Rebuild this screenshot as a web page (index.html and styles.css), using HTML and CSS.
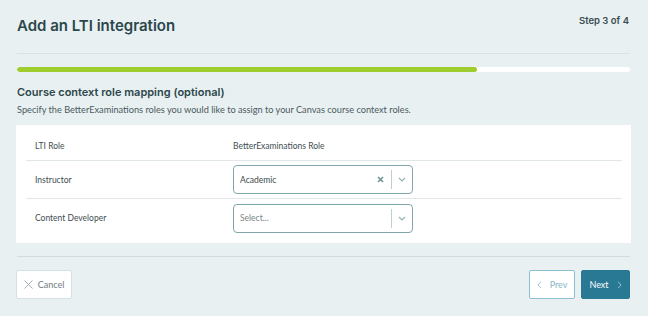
FILE: index.html
```html
<!DOCTYPE html>
<html>
<head>
<meta charset="utf-8">
<link rel="stylesheet" href="styles.css">
</head>
<body>
<div class="page">
  <header class="top">
    <h1 class="title">Add an LTI integration</h1>
    <div class="step">Step 3 of 4</div>
  </header>
  <div class="progress"><div class="progress-fill" style="width:75%"></div></div>
  <h2 class="section-title">Course context role mapping (optional)</h2>
  <p class="desc">Specify the BetterExaminations roles you would like to assign to your Canvas course context roles.</p>
  <div class="card">
    <div class="row head">
      <div class="cell">LTI Role</div>
      <div class="cell">BetterExaminations Role</div>
    </div>
    <div class="row">
      <div class="cell">Instructor</div>
      <div class="cell">
        <div class="select">
          <span class="value">Academic</span>
          <span class="clear"><svg width="7" height="7" viewBox="0 0 7 7"><path d="M1 1L6 6M6 1L1 6" stroke="#6f9296" stroke-width="1.6"/></svg></span>
          <span class="sep"></span>
          <span class="chev"><svg width="8" height="5" viewBox="0 0 8 5"><path d="M1 1L4 4L7 1" fill="none" stroke="#8fb1b5" stroke-width="1.1"/></svg></span>
        </div>
      </div>
    </div>
    <div class="row last">
      <div class="cell">Content Developer</div>
      <div class="cell">
        <div class="select">
          <span class="value placeholder">Select...</span>
          <span class="sep"></span>
          <span class="chev"><svg width="8" height="5" viewBox="0 0 8 5"><path d="M1 1L4 4L7 1" fill="none" stroke="#8fb1b5" stroke-width="1.1"/></svg></span>
        </div>
      </div>
    </div>
  </div>
  <footer class="footer">
    <button class="btn cancel"><svg class="ico" width="9" height="9" viewBox="0 0 9 9"><path d="M0.5 0.5L8.5 8.5M8.5 0.5L0.5 8.5" stroke="#a3aeb1" stroke-width="1"/></svg><span>Cancel</span></button>
    <div class="nav">
      <button class="btn prev"><svg class="ico" width="5" height="8" viewBox="0 0 5 8"><path d="M4 0.8L1 4L4 7.2" fill="none" stroke="#9cc6d4" stroke-width="1"/></svg><span>Prev</span></button>
      <button class="btn next"><span>Next</span><svg class="ico" width="5" height="8" viewBox="0 0 5 8"><path d="M1 0.8L4 4L1 7.2" fill="none" stroke="#8fc0d0" stroke-width="1"/></svg></button>
    </div>
  </footer>
</div>
</body>
</html>
```
FILE: styles.css
```css
* { box-sizing: border-box; }
html, body { margin: 0; padding: 0; }
body {
  background: #e8f0f2;
  font-family: Lato, "Liberation Sans", sans-serif;
  color: #3d4f53;
  width: 648px;
  height: 316px;
  overflow: hidden;
}
.page { padding: 0 18px 0 17px; }
.top {
  display: flex;
  justify-content: space-between;
  align-items: flex-start;
  height: 54px;
  border-bottom: 1px solid #d9e3e6;
}
.title {
  margin: 17px 0 0;
  font-family: Inter, "Open Sans", sans-serif;
  font-weight: 600;
  font-size: 15px;
  line-height: 18px;
  color: #2c474b;
}
.step {
  margin-top: 15px;
  font-family: Inter, "Open Sans", sans-serif;
  font-weight: 600;
  font-size: 9.5px;
  line-height: 11px;
  color: #3a4c50;
  margin-right: 1px;
}
.progress {
  margin-top: 13px;
  height: 5px;
  background: #fff;
  border-radius: 3px;
  overflow: hidden;
}
.progress-fill { height: 100%; background: #9fcc2e; border-radius: 3px; }
.section-title {
  margin: 14px 0 0;
  font-family: Inter, "Open Sans", sans-serif;
  font-weight: 600;
  font-size: 11px;
  line-height: 13px;
  color: #2c474b;
}
.desc {
  margin: 5px 0 0;
  font-size: 9.2px;
  line-height: 12px;
  color: #4b5a5e;
}
.card {
  margin: 9px -1px 0 -1px;
  background: #fff;
  padding: 7px 9px 6px 10px;
}
.row {
  display: grid;
  grid-template-columns: 198px 1fr;
  align-items: center;
  height: 38px;
  border-bottom: 1px solid #e1e6e7;
  font-size: 8.5px;
  color: #414e51;
}
.row.head { height: 29px; }
.row.last { border-bottom: none; height: 38px; }
.cell { padding: 0 9px; }
.select {
  width: 180px;
  height: 29px;
  border: 1px solid #7fa6aa;
  border-radius: 4px;
  display: flex;
  align-items: center;
  padding-left: 6px;
}
.value { flex: 1; font-size: 8.5px; color: #3d4a4d; }
.placeholder { color: #7a8588; }
.clear { display: flex; align-items: center; padding: 0 7px 0 6px; }
.sep { width: 1px; height: 19px; background: #bcd0d2; }
.chev { display: flex; align-items: center; justify-content: center; width: 20px; }
.footer {
  margin-top: 13px;
  border-top: 1px solid #d2dcdf;
  padding-top: 13px;
  display: flex;
  justify-content: space-between;
}
.btn {
  height: 29px;
  border-radius: 2px;
  font-family: Lato, "Liberation Sans", sans-serif;
  font-size: 9px;
  display: flex;
  align-items: center;
  justify-content: center;
  gap: 5px;
  padding: 0;
  cursor: pointer;
}
.ico { flex-shrink: 0; display: block; }
.cancel { margin-left: -1px; background: #fff; border: 1px solid #d6e1e5; color: #6f7d81; width: 56px; }
.nav { display: flex; gap: 6px; }
.prev { background: #fff; border: 1px solid #8cc0d2; color: #86b6c8; width: 46px; gap: 8px; }
.next { background: #297994; border: 1px solid #297994; color: #fff; width: 49px; gap: 8px; }
```
